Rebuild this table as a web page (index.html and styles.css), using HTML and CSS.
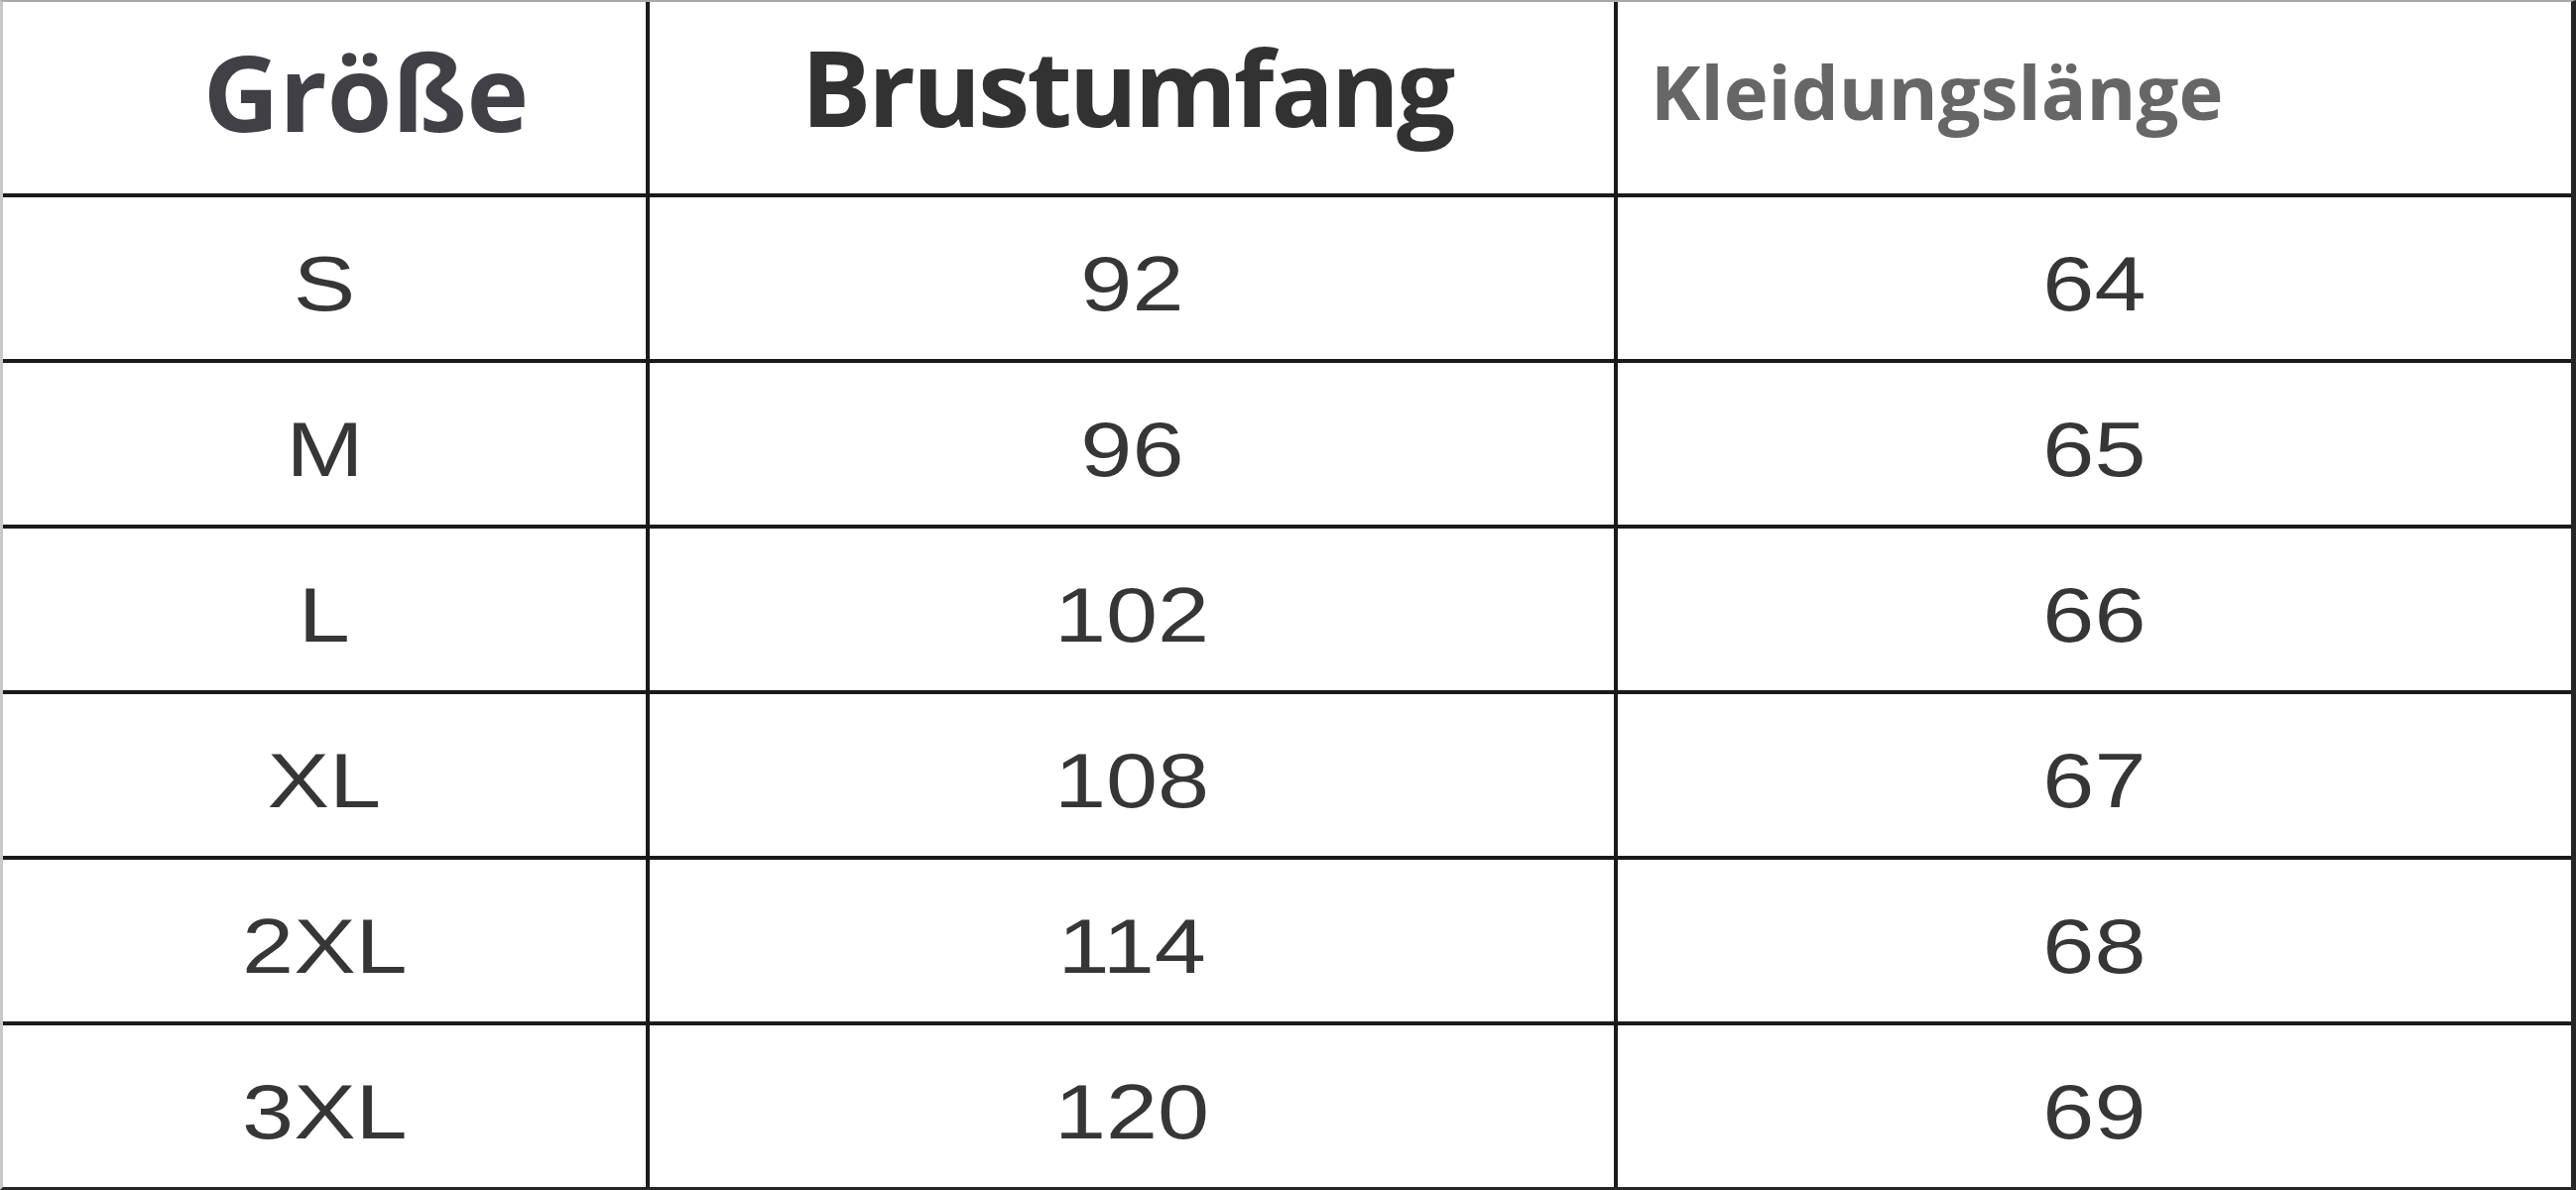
FILE: index.html
```html
<!DOCTYPE html>
<html lang="de">
<head>
<meta charset="utf-8">
<title>Größentabelle</title>
<link rel="stylesheet" href="styles.css">
</head>
<body>
<div class="size-table">
  <div class="cell head head-size">Größe</div>
  <div class="cell head head-chest">Brustumfang</div>
  <div class="cell head head-length">Kleidungslänge</div>

  <div class="cell"><span class="val">S</span></div>
  <div class="cell"><span class="val">92</span></div>
  <div class="cell"><span class="val">64</span></div>

  <div class="cell"><span class="val">M</span></div>
  <div class="cell"><span class="val">96</span></div>
  <div class="cell"><span class="val">65</span></div>

  <div class="cell"><span class="val">L</span></div>
  <div class="cell"><span class="val">102</span></div>
  <div class="cell"><span class="val">66</span></div>

  <div class="cell"><span class="val">XL</span></div>
  <div class="cell"><span class="val">108</span></div>
  <div class="cell"><span class="val">67</span></div>

  <div class="cell"><span class="val">2XL</span></div>
  <div class="cell"><span class="val">114</span></div>
  <div class="cell"><span class="val">68</span></div>

  <div class="cell"><span class="val">3XL</span></div>
  <div class="cell"><span class="val">120</span></div>
  <div class="cell"><span class="val">69</span></div>
</div>
</body>
</html>
```

FILE: styles.css
```css
html, body {
  margin: 0;
  padding: 0;
  background: #ffffff;
}

.size-table {
  display: grid;
  grid-template-columns: 648px 972px 961px;
  grid-template-rows: 193px repeat(6, 163px);
  gap: 4px;
  width: 2597px;
  height: 1200px;
  box-sizing: border-box;
  background: #1a1a1a;
  border-top: 2px solid #a8a8a8;
  border-left: 3px solid #c8c8c8;
  border-right: 5px solid #262626;
  border-bottom: 3px solid #262626;
}

.cell {
  background: #ffffff;
  display: flex;
  align-items: center;
  justify-content: center;
  padding-top: 11px;
  box-sizing: border-box;
  overflow: hidden;
}

.val {
  display: inline-block;
  font-family: "Liberation Sans", Arial, sans-serif;
  font-size: 78px;
  line-height: 1;
  color: #363636;
  transform: scaleX(1.2);
}

.head {
  align-items: flex-start;
  font-family: "Open Sans", "Noto Sans", sans-serif;
  font-weight: 700;
  line-height: 1;
  white-space: nowrap;
}

.head-size {
  font-size: 106px;
  color: #404046;
  padding-top: 37px;
  padding-left: 84px;
}

.head-chest {
  font-size: 105px;
  color: #323232;
  padding-top: 33px;
  padding-right: 10px;
  letter-spacing: -3px;
}

.head-length {
  font-size: 76px;
  color: #666666;
  justify-content: flex-start;
  padding-top: 52px;
  padding-left: 33px;
}
```
